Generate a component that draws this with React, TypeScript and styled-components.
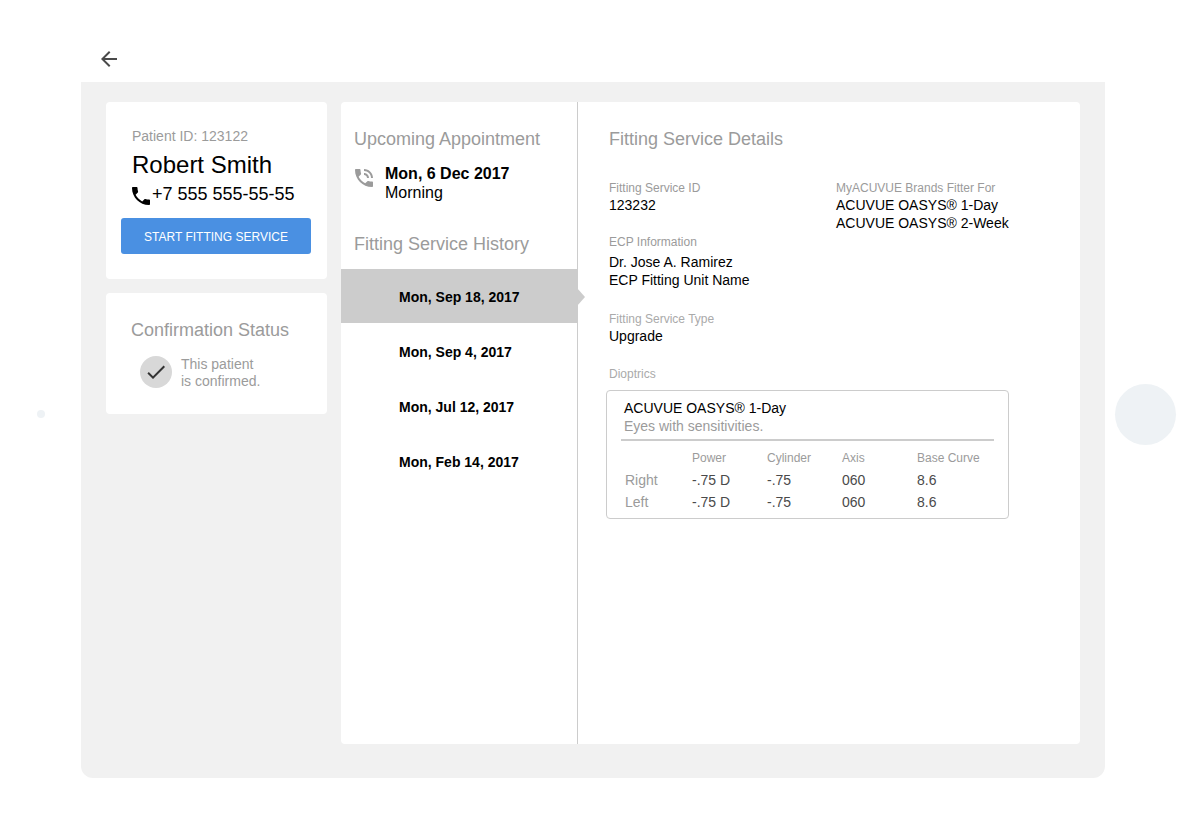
import React, { useState } from "react";
import styled, { createGlobalStyle } from "styled-components";

const colors = {
  screen: "#f1f1f1",
  hardware: "#eef2f5",
  muted: "#9b9b9b",
  faint: "#aaaaaa",
  line: "#cccccc",
  primary: "#4a90e2",
  text: "#000000",
  cell: "#4a4a4a",
};

const GlobalStyle = createGlobalStyle`
  *, *::before, *::after { box-sizing: border-box; }
  body {
    margin: 0;
    background: #ffffff;
    color: ${colors.text};
    font-family: "Liberation Sans", Arial, sans-serif;
    font-size: 14px;
    line-height: 18px;
  }
  h1, h2, p, ul, dl, dd, dt { margin: 0; padding: 0; }
  ul { list-style: none; }
  button { font: inherit; color: inherit; border: 0; background: none; padding: 0; cursor: pointer; }
`;

const Tablet = styled.div`
  display: grid;
  grid-template-columns: 81px minmax(0, 1fr) 81px;
  align-items: center;
  justify-items: center;
  min-height: 100vh;
`;

const Hardware = styled.span<{ $size: number }>`
  width: ${(p) => p.$size}px;
  height: ${(p) => p.$size}px;
  border-radius: 50%;
  background: ${colors.hardware};
`;

const Device = styled.div`
  display: flex;
  flex-direction: column;
  align-self: stretch;
  justify-self: stretch;
  padding: 36px 0 50px;
`;

const TopBar = styled.header`
  display: flex;
  align-items: center;
  height: 46px;
  padding: 0 20px;
`;

const BackButton = styled.button`
  display: flex;
  color: ${colors.cell};
`;

const Screen = styled.main`
  flex: 1;
  display: grid;
  grid-template-columns: 221px minmax(0, 1fr);
  gap: 14px;
  padding: 20px 25px 34px;
  background: ${colors.screen};
  border-radius: 0 0 12px 12px;
`;

const Sidebar = styled.aside`
  display: flex;
  flex-direction: column;
  gap: 14px;
`;

const Card = styled.section`
  padding: 25px 16px 25px 15px;
  background: #ffffff;
  border-radius: 4px;
`;

const Indent = styled.div`
  padding: 0 0 0 11px;
`;

const Muted = styled.p`
  color: ${colors.muted};
`;

const PatientName = styled.h1`
  padding: 5px 0;
  font-size: 24px;
  font-weight: 400;
  line-height: 30px;
`;

const Phone = styled.p`
  display: flex;
  gap: 2px;
  height: 20px;
  font-size: 18px;
  line-height: 18px;

  svg { align-self: flex-end; }
`;

const PrimaryButton = styled.button`
  width: 100%;
  height: 36px;
  margin-top: 13px;
  padding-top: 2px;
  border-radius: 3px;
  background: ${colors.primary};
  color: #ffffff;
  font-size: 12px;
`;

const Heading = styled.h2`
  color: ${colors.muted};
  font-size: 18px;
  font-weight: 400;
  line-height: 22px;
`;

const StatusCard = styled(Card)`
  padding: 26px 25px 24px;
`;

const Status = styled.div`
  display: flex;
  gap: 9px;
  padding: 15px 9px 0;
  color: ${colors.muted};
  line-height: 17px;
`;

const StatusMark = styled.span`
  display: flex;
  align-items: center;
  justify-content: center;
  width: 32px;
  height: 32px;
  border-radius: 50%;
  background: #d8d8d8;
  color: #333333;
`;

const Panel = styled.div`
  display: grid;
  grid-template-columns: 237px minmax(0, 1fr);
  background: #ffffff;
  border-radius: 4px;
`;

const Schedule = styled.section`
  padding: 26px 0;
  border-right: 1px solid ${colors.line};

  ${Heading} { padding: 0 13px; }
`;

const Appointment = styled.div`
  display: flex;
  gap: 12px;
  padding: 14px 14px 31px;
  font-size: 16px;
  line-height: 19px;

  svg { margin-top: 5px; color: ${colors.muted}; }
`;

const History = styled.ul`
  display: grid;
  gap: 1px;
  padding-top: 14px;
`;

const Visit = styled.button<{ $active: boolean }>`
  position: relative;
  display: block;
  width: 100%;
  height: 54px;
  padding: 2px 0 0 58px;
  background: ${(p) => (p.$active ? colors.line : "transparent")};
  font-weight: 700;
  text-align: left;

  &::after {
    content: "";
    display: ${(p) => (p.$active ? "block" : "none")};
    position: absolute;
    left: 100%;
    top: 19px;
    border: solid transparent;
    border-width: 9px 0 9px 8px;
    border-left-color: ${colors.line};
  }
`;

const Details = styled.section`
  padding: 26px 28px;
`;

const DetailsHeading = styled(Heading)`
  padding-left: 3px;
`;

const Facts = styled.div`
  display: grid;
  grid-template-columns: 227px auto;
  justify-content: start;
  padding: 30px 0 21px 3px;
  white-space: nowrap;
`;

const FactList = styled.dl`
  display: flex;
  flex-direction: column;
  gap: 20px;
`;

const Fact = styled.div<{ $roomy?: boolean }>`
  display: grid;
  padding-bottom: ${(p) => (p.$roomy ? 2 : 0)}px;

  dt { padding-bottom: ${(p) => (p.$roomy ? 3 : 0)}px; }
`;

const Term = styled.dt<{ $faint?: boolean }>`
  color: ${(p) => (p.$faint ? colors.faint : colors.muted)};
  font-size: 12px;
  line-height: 16px;
`;

const Dioptrics = styled.figure`
  max-width: 403px;
  margin: 0;
`;

const Caption = styled.figcaption`
  padding: 0 0 8px 3px;
  color: ${colors.faint};
  font-size: 12px;
  line-height: 16px;
`;

const LensBox = styled.div`
  padding: 8px 14px 5px;
  border: 1px solid ${colors.line};
  border-radius: 4px;
`;

const LensTitle = styled.div`
  padding: 0 3px 4px;
  border-bottom: 2px solid ${colors.line};
  line-height: 18px;
`;

const LensTable = styled.table`
  width: 100%;
  margin-top: 6px;
  table-layout: fixed;
  border-collapse: collapse;
  color: ${colors.cell};

  th, td {
    width: 75px;
    height: 22px;
    padding: 0;
    font-weight: 400;
    text-align: left;
    white-space: nowrap;
  }
  th { color: ${colors.muted}; }
  thead th { font-size: 12px; }
  th:first-child { width: 71px; padding-left: 4px; }
  th:last-child { width: auto; }
`;

type GlyphProps = { d: string; size: number; box: string };

const Glyph = ({ d, size, box }: GlyphProps) => (
  <svg width={size} height={size} viewBox={box} fill="currentColor" aria-hidden="true">
    <path d={d} />
  </svg>
);

const paths = {
  back: "M20 11H7.83l5.59-5.59L12 4l-8 8 8 8 1.41-1.41L7.83 13H20v-2z",
  call: "M6.62 10.79c1.44 2.83 3.76 5.14 6.59 6.59l2.2-2.2c.27-.27.67-.36 1.02-.24 1.12.37 2.33.57 3.57.57.55 0 1 .45 1 1V20c0 .55-.45 1-1 1-9.39 0-17-7.61-17-17 0-.55.45-1 1-1h3.5c.55 0 1 .45 1 1 0 1.25.2 2.45.57 3.57.11.35.03.74-.25 1.02l-2.2 2.2z",
  talk: "M20 15.5c-1.25 0-2.45-.2-3.57-.57-.35-.11-.74-.03-1.02.24l-2.2 2.2c-2.83-1.44-5.15-3.75-6.59-6.58l2.2-2.21c.28-.27.36-.66.25-1.01C8.7 6.45 8.5 5.25 8.5 4c0-.55-.45-1-1-1H4c-.55 0-1 .45-1 1 0 9.39 7.61 17 17 17 .55 0 1-.45 1-1v-3.5c0-.55-.45-1-1-1zM19 12h2c0-4.97-4.03-9-9-9v2c3.87 0 7 3.13 7 7zm-4 0h2c0-2.76-2.24-5-5-5v2c1.66 0 3 1.34 3 3z",
  check: "M9 16.17L4.83 12l-1.42 1.41L9 19 21 7l-1.41-1.41z",
};

const visits = ["Mon, Sep 18, 2017", "Mon, Sep 4, 2017", "Mon, Jul 12, 2017", "Mon, Feb 14, 2017"];

const eyes = [
  { eye: "Right", values: ["-.75 D", "-.75", "060", "8.6"] },
  { eye: "Left", values: ["-.75 D", "-.75", "060", "8.6"] },
];

export default function App() {
  const [selected, setSelected] = useState(0);

  return (
    <>
      <GlobalStyle />
      <Tablet>
        <Hardware $size={8} />
        <Device>
          <TopBar>
            <BackButton type="button" aria-label="Back">
              <Glyph d={paths.back} size={16} box="4 4 16 16" />
            </BackButton>
          </TopBar>
          <Screen>
            <Sidebar>
              <Card>
                <Indent>
                  <Muted>Patient ID: 123122</Muted>
                  <PatientName>Robert Smith</PatientName>
                  <Phone>
                    <Glyph d={paths.call} size={18} box="3 3 18 18" />
                    +7 555 555-55-55
                  </Phone>
                </Indent>
                <PrimaryButton type="button">START FITTING SERVICE</PrimaryButton>
              </Card>
              <StatusCard>
                <Heading>Confirmation Status</Heading>
                <Status>
                  <StatusMark>
                    <Glyph d={paths.check} size={24} box="0 0 24 24" />
                  </StatusMark>
                  <p>
                    This patient
                    <br />
                    is confirmed.
                  </p>
                </Status>
              </StatusCard>
            </Sidebar>
            <Panel>
              <Schedule>
                <Heading>Upcoming Appointment</Heading>
                <Appointment>
                  <Glyph d={paths.talk} size={18} box="3 3 18 18" />
                  <div>
                    <strong>Mon, 6 Dec 2017</strong>
                    <p>Morning</p>
                  </div>
                </Appointment>
                <Heading>Fitting Service History</Heading>
                <History>
                  {visits.map((visit, i) => (
                    <li key={visit}>
                      <Visit type="button" $active={i === selected} onClick={() => setSelected(i)}>
                        {visit}
                      </Visit>
                    </li>
                  ))}
                </History>
              </Schedule>
              <Details>
                <DetailsHeading>Fitting Service Details</DetailsHeading>
                <Facts>
                  <FactList>
                    <Fact>
                      <Term>Fitting Service ID</Term>
                      <dd>123232</dd>
                    </Fact>
                    <Fact $roomy>
                      <Term>ECP Information</Term>
                      <dd>Dr. Jose A. Ramirez</dd>
                      <dd>ECP Fitting Unit Name</dd>
                    </Fact>
                    <Fact>
                      <Term $faint>Fitting Service Type</Term>
                      <dd>Upgrade</dd>
                    </Fact>
                  </FactList>
                  <FactList>
                    <Fact>
                      <Term>MyACUVUE Brands Fitter For</Term>
                      <dd>ACUVUE OASYS® 1-Day</dd>
                      <dd>ACUVUE OASYS® 2-Week</dd>
                    </Fact>
                  </FactList>
                </Facts>
                <Dioptrics>
                  <Caption>Dioptrics</Caption>
                  <LensBox>
                    <LensTitle>
                      <p>ACUVUE OASYS® 1-Day</p>
                      <Muted>Eyes with sensitivities.</Muted>
                    </LensTitle>
                    <LensTable>
                      <thead>
                        <tr>
                          <th aria-label="Eye" />
                          <th scope="col">Power</th>
                          <th scope="col">Cylinder</th>
                          <th scope="col">Axis</th>
                          <th scope="col">Base Curve</th>
                        </tr>
                      </thead>
                      <tbody>
                        {eyes.map((row) => (
                          <tr key={row.eye}>
                            <th scope="row">{row.eye}</th>
                            {row.values.map((value, i) => (
                              <td key={i}>{value}</td>
                            ))}
                          </tr>
                        ))}
                      </tbody>
                    </LensTable>
                  </LensBox>
                </Dioptrics>
              </Details>
            </Panel>
          </Screen>
        </Device>
        <Hardware $size={61} />
      </Tablet>
    </>
  );
}
